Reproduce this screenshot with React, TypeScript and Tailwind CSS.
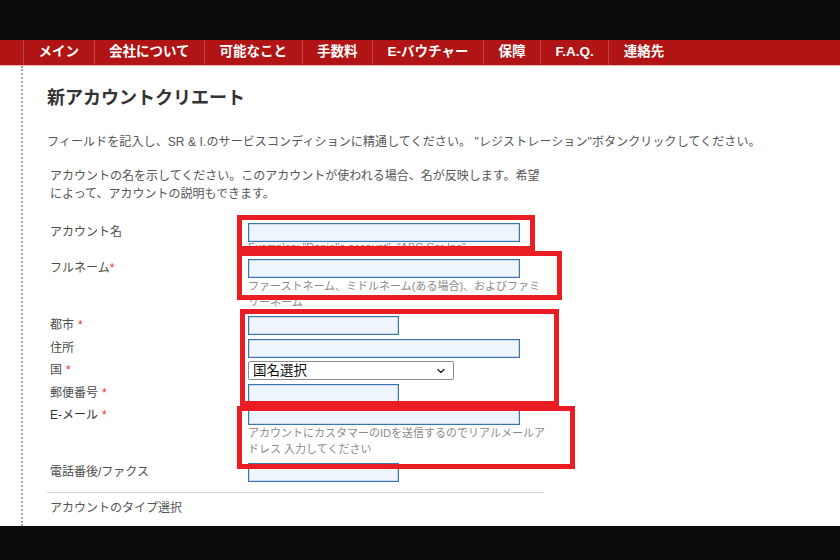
import { ChevronDown } from 'lucide-react';

const NAV = ['メイン', '会社について', '可能なこと', '手数料', 'E-バウチャー', '保障', 'F.A.Q.', '連絡先'];

const font = { fontFamily: "'Liberation Sans', 'Noto Sans CJK JP', sans-serif" };

function Req({ gap = true }: { gap?: boolean }) {
  return <span className={`text-[#e8333a] ${gap ? 'ml-[4px]' : ''}`}>*</span>;
}

function Field({ w = 'w-[272px]' }: { w?: string }) {
  return <div className={`${w} h-[19px] bg-[#eef5fd] border border-[#3b74b6] shadow-[inset_0_0_0_0.5px_rgba(59,116,182,0.4)]`} />;
}

function Help({ children, className = 'leading-[16px]' }: { children: React.ReactNode; className?: string }) {
  return <div className={`w-[302px] text-[11px] text-[#8a8a8a] ${className}`}>{children}</div>;
}

function Row({ label, children, className = '' }: { label: React.ReactNode; children: React.ReactNode; className?: string }) {
  return (
    <div className={`flex ${className}`}>
      <div className="w-[198px] shrink-0 text-[12px] leading-[19px] text-[#4d4d4d]">{label}</div>
      <div className="flex flex-col">{children}</div>
    </div>
  );
}

function Box({ className }: { className: string }) {
  return <div className={`absolute border-[5px] border-[#ea1c24] pointer-events-none ${className}`} />;
}

export default function App() {
  return (
    <div className="relative h-[560px] w-[840px] flex flex-col overflow-hidden bg-white" style={font}>
      <div className="h-[40px] shrink-0 bg-[#0b0b0b]" />

      <nav className="h-[26px] shrink-0 flex items-stretch pl-[23px] bg-[#b01414] border-b border-[#e7b3b3]">
        {NAV.map((n) => (
          <div key={n} className="flex items-center px-[14.5px] border-l border-[#c2403f] text-white text-[13.5px] font-semibold whitespace-nowrap">
            {n}
          </div>
        ))}
      </nav>

      <main className="flex-1 min-h-0 pl-[21px]">
        <div className="h-full border-l-2 border-dotted border-[#a8a8a8] pl-[24px]">
          <h1 className="pt-[20px] text-[18px] leading-[24px] font-bold text-[#333]">新アカウントクリエート</h1>
          <p className="mt-[23px] text-[12px] leading-[18px] text-[#555] whitespace-nowrap tracking-[0.1px]">
            フィールドを記入し、SR &amp; I.のサービスコンディションに精通してください。 "レジストレーション"ボタンクリックしてください。
          </p>
          <div className="pl-[3px]">
            <p className="mt-[16px] w-[500px] text-[12px] leading-[18px] text-[#555]">
              アカウントの名を示してください。このアカウントが使われる場合、名が反映します。希望によって、アカウントの説明もできます。
            </p>

            <div className="mt-[20px] flex flex-col">
              <Row label="アカウント名">
                <Field />
                <Help className="leading-[9px] pt-[1px] pb-[6px]">Examples: "Daniel's account", "ABC Car Inc"</Help>
              </Row>
              <Row label={<>フルネーム<Req gap={false} /></>} className="mt-[1px]">
                <Field />
                <Help>ファーストネーム、ミドルネーム(ある場合)、およびファミリーネーム</Help>
              </Row>
              <Row label={<>都市<Req /></>} className="mt-[6px]">
                <Field w="w-[151px]" />
              </Row>
              <Row label="住所" className="mt-[4px]">
                <Field />
              </Row>
              <Row label={<>国<Req /></>} className="mt-[3px]">
                <div className="relative w-[206px] h-[19px] border border-[#8a8a8a] rounded-[2px] bg-white flex items-center pl-[4px] text-[13.5px] text-[#111] leading-none">
                  国名選択
                  <ChevronDown size={12} strokeWidth={2.5} className="absolute right-[6px] top-[3px] text-[#222]" />
                </div>
              </Row>
              <Row label={<>郵便番号<Req /></>} className="mt-[4px]">
                <Field w="w-[151px]" />
              </Row>
              <Row label={<span className="text-[#333]">E-メール<Req /></span>} className="mt-[3px]">
                <Field />
                <Help>アカウントにカスタマーのIDを送信するのでリアルメールアドレス 入力してください</Help>
              </Row>
              <Row label="電話番後/ファクス" className="mt-[6px]">
                <Field w="w-[151px]" />
              </Row>
            </div>

            <div className="mt-[10px] -ml-[3px] w-[497px] h-px bg-[#cfcfcf]" />
            <div className="mt-[6px] text-[12px] leading-[18px] text-[#555]">アカウントのタイプ選択</div>
          </div>
        </div>
      </main>

      <div className="h-[34px] shrink-0 bg-[#0b0b0b]" />

      <Box className="left-[237px] top-[215px] w-[298px] h-[36px]" />
      <Box className="left-[237px] top-[251px] w-[325px] h-[49px]" />
      <Box className="left-[240px] top-[309px] w-[319px] h-[97px]" />
      <Box className="left-[237px] top-[406px] w-[338px] h-[63px]" />
    </div>
  );
}
